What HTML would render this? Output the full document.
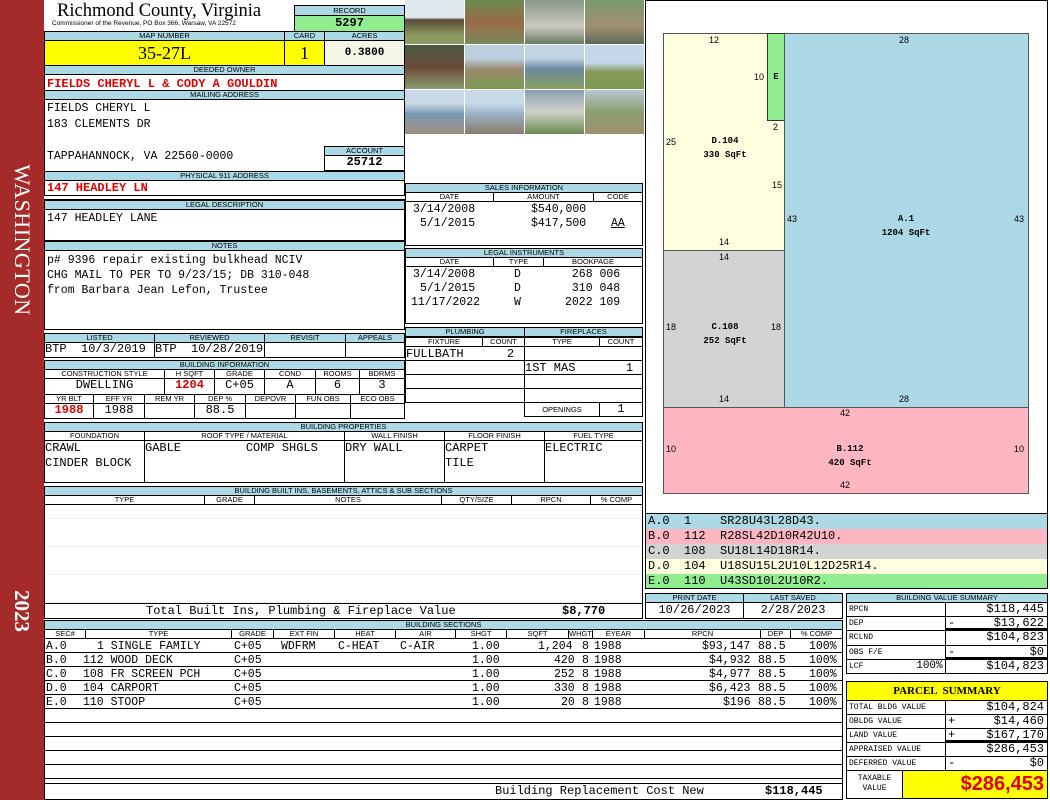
<!DOCTYPE html>
<html><head><meta charset="utf-8"><style>
*{margin:0;padding:0}
body{width:1050px;height:800px;position:relative;background:#fff;overflow:hidden;font-family:"Liberation Mono",monospace}
.c{position:absolute;box-sizing:border-box;border:1px solid #000;overflow:hidden;white-space:pre;font-size:11px;line-height:13px;padding-left:2px;color:#000}
.h{background:#add8e6;font-family:"Liberation Sans",sans-serif;font-size:7.5px;text-align:center;padding:0;line-height:8px}
.ct{text-align:center;padding:0}
.r{text-align:right;padding-right:3px}
.red{color:#e00000;font-weight:bold}
.n{position:absolute;font-family:"Liberation Sans",sans-serif;font-size:9px;color:#000}
.m{position:absolute;font-size:9px;font-weight:bold;text-align:center;line-height:14px}
.ph{position:absolute;width:59px;height:44px}
.t{position:absolute;font-size:11.5px;white-space:pre}
.row{position:absolute;left:44px;width:799px;height:14px;font-size:11.5px;line-height:14px;white-space:pre}
.row span{position:absolute;top:0}
</style></head><body>
<div style="position:absolute;left:0;top:0;width:44px;height:800px;background:#a52a2a"></div>
<div style="position:absolute;left:-68px;top:229px;width:180px;text-align:center;transform:rotate(90deg);color:#fff;font-family:'Liberation Serif',serif;font-size:22px;line-height:22px;letter-spacing:0.5px">WASHINGTON</div>
<div style="position:absolute;left:-8px;top:600px;width:60px;text-align:center;transform:rotate(90deg);color:#fff;font-family:'Liberation Serif',serif;font-size:21px;font-weight:bold;line-height:22px">2023</div>

<div style="position:absolute;left:57px;top:1px;font-family:'Liberation Serif',serif;font-size:18.5px;line-height:20px">Richmond County, Virginia</div>
<div style="position:absolute;left:52px;top:20px;font-family:'Liberation Sans',sans-serif;font-size:6.5px">Commissioner of the Revenue, PO Box 366, Warsaw, VA 22572</div>
<div class="c h" style="left:294px;top:5px;width:111px;height:11px;line-height:9px">RECORD</div>
<div class="c ct" style="left:294px;top:15px;width:111px;height:17px;background:#90ee90;font-weight:bold;font-size:12px;line-height:15px">5297</div>
<div class="c h" style="left:44px;top:31px;width:241px;height:10px">MAP NUMBER</div>
<div class="c h" style="left:284px;top:31px;width:41px;height:10px">CARD</div>
<div class="c h" style="left:324px;top:31px;width:81px;height:10px">ACRES</div>
<div class="c ct" style="left:44px;top:40px;width:241px;height:26px;background:#ffff00;font-family:'Liberation Serif',serif;font-size:18px;line-height:24px">35-27L</div>
<div class="c ct" style="left:284px;top:40px;width:41px;height:26px;background:#ffff00;font-family:'Liberation Serif',serif;font-size:18px;line-height:24px">1</div>
<div class="c ct" style="left:324px;top:40px;width:81px;height:26px;background:#f5f5e6;font-weight:bold;font-size:11px;line-height:24px">0.3800</div>
<div class="c h" style="left:44px;top:65px;width:361px;height:10px">DEEDED OWNER</div>
<div class="c red" style="left:44px;top:74px;width:361px;height:17px;line-height:18px;font-size:12px">FIELDS CHERYL L &amp; CODY A GOULDIN</div>
<div class="c h" style="left:44px;top:90px;width:361px;height:10px">MAILING ADDRESS</div>
<div class="c" style="left:44px;top:99px;width:361px;height:73px;line-height:16px;padding-top:1px;font-size:11.5px">FIELDS CHERYL L
183 CLEMENTS DR

TAPPAHANNOCK, VA 22560-0000</div>
<div class="c h" style="left:324px;top:146px;width:81px;height:10px">ACCOUNT</div>
<div class="c ct" style="left:324px;top:155px;width:81px;height:16px;font-weight:bold;font-size:12px">25712</div>
<div class="c h" style="left:44px;top:171px;width:361px;height:10px">PHYSICAL 911 ADDRESS</div>
<div class="c red" style="left:44px;top:180px;width:361px;height:16px;font-size:12px;line-height:15px">147 HEADLEY LN</div>
<div class="c" style="left:44px;top:199px;width:361px;height:42px;padding-top:12px;font-size:11.5px">147 HEADLEY LANE</div>
<div class="c h" style="left:44px;top:200px;width:361px;height:10px">LEGAL DESCRIPTION</div>
<div class="c" style="left:44px;top:240px;width:361px;height:90px;padding-top:12px;line-height:15px;font-size:11.5px">p# 9396 repair existing bulkhead NCIV
CHG MAIL TO PER TO 9/23/15; DB 310-048
from Barbara Jean Lefon, Trustee</div>
<div class="c h" style="left:44px;top:241px;width:361px;height:10px">NOTES</div>

<div class="c h" style="left:44px;top:333px;width:111px;height:10px">LISTED</div>
<div class="c h" style="left:154px;top:333px;width:111px;height:10px">REVIEWED</div>
<div class="c h" style="left:264px;top:333px;width:82px;height:10px">REVISIT</div>
<div class="c h" style="left:345px;top:333px;width:60px;height:10px">APPEALS</div>
<div class="c" style="left:44px;top:342px;width:111px;height:16px;padding:0;font-size:12px">BTP  10/3/2019</div>
<div class="c" style="left:154px;top:342px;width:111px;height:16px;padding:0;font-size:12px">BTP  10/28/2019</div>
<div class="c" style="left:264px;top:342px;width:82px;height:16px"></div>
<div class="c" style="left:345px;top:342px;width:60px;height:16px"></div>

<div class="c h" style="left:44px;top:360px;width:361px;height:10px">BUILDING INFORMATION</div>
<div class="c h" style="left:44px;top:369px;width:121px;height:10px;background:#fff">CONSTRUCTION STYLE</div>
<div class="c h" style="left:164px;top:369px;width:51px;height:10px;background:#fff">H SQFT</div>
<div class="c h" style="left:214px;top:369px;width:51px;height:10px;background:#fff">GRADE</div>
<div class="c h" style="left:264px;top:369px;width:52px;height:10px;background:#fff">COND</div>
<div class="c h" style="left:315px;top:369px;width:45px;height:10px;background:#fff">ROOMS</div>
<div class="c h" style="left:359px;top:369px;width:46px;height:10px;background:#fff">BDRMS</div>
<div class="c ct" style="left:44px;top:378px;width:121px;height:17px;font-size:12px">DWELLING</div>
<div class="c ct red" style="left:164px;top:378px;width:51px;height:17px;font-size:12px">1204</div>
<div class="c ct" style="left:214px;top:378px;width:51px;height:17px;font-size:12px">C+05</div>
<div class="c ct" style="left:264px;top:378px;width:52px;height:17px;font-size:12px">A</div>
<div class="c ct" style="left:315px;top:378px;width:45px;height:17px;font-size:12px">6</div>
<div class="c ct" style="left:359px;top:378px;width:46px;height:17px;font-size:12px">3</div>
<div class="c h" style="left:44px;top:394px;width:50px;height:10px;background:#fff">YR BLT</div>
<div class="c h" style="left:93px;top:394px;width:52px;height:10px;background:#fff">EFF YR</div>
<div class="c h" style="left:144px;top:394px;width:51px;height:10px;background:#fff">REM YR</div>
<div class="c h" style="left:194px;top:394px;width:52px;height:10px;background:#fff">DEP %</div>
<div class="c h" style="left:245px;top:394px;width:51px;height:10px;background:#fff">DEPOVR</div>
<div class="c h" style="left:295px;top:394px;width:56px;height:10px;background:#fff">FUN OBS</div>
<div class="c h" style="left:350px;top:394px;width:55px;height:10px;background:#fff">ECO OBS</div>
<div class="c ct red" style="left:44px;top:403px;width:50px;height:16px;font-size:12px">1988</div>
<div class="c ct" style="left:93px;top:403px;width:52px;height:16px;font-size:12px">1988</div>
<div class="c" style="left:144px;top:403px;width:51px;height:16px"></div>
<div class="c ct" style="left:194px;top:403px;width:52px;height:16px;font-size:12px">88.5</div>
<div class="c" style="left:245px;top:403px;width:51px;height:16px"></div>
<div class="c" style="left:295px;top:403px;width:56px;height:16px"></div>
<div class="c" style="left:350px;top:403px;width:55px;height:16px"></div>

<!-- photos -->
<div class="ph" style="left:405px;top:0;background:linear-gradient(#dfe8ef 40%,#5a4a3a 45%,#8a9a60 80%)"></div>
<div class="ph" style="left:465px;top:0;background:linear-gradient(#6a8a50,#9a6a4a 50%,#7a8a5a)"></div>
<div class="ph" style="left:525px;top:0;background:linear-gradient(#8a9a88,#c8c8c0 60%,#6a7a60)"></div>
<div class="ph" style="left:585px;top:0;background:linear-gradient(#7a9a70,#a09070 60%,#5a6a5a)"></div>
<div class="ph" style="left:405px;top:45px;background:linear-gradient(#4a5a40,#6a4a3a 50%,#8a9a70)"></div>
<div class="ph" style="left:465px;top:45px;background:linear-gradient(#bcd0e0 30%,#9a8a70 55%,#7a9a50)"></div>
<div class="ph" style="left:525px;top:45px;background:linear-gradient(#c0d4e4 30%,#6a8aa0 55%,#8aa060)"></div>
<div class="ph" style="left:585px;top:45px;background:linear-gradient(#c4d8ea 40%,#8a9a60 60%,#7a9a50)"></div>
<div class="ph" style="left:405px;top:90px;background:linear-gradient(#c8d8e8 30%,#7a98b0 55%,#a09080)"></div>
<div class="ph" style="left:465px;top:90px;background:linear-gradient(#c8dae8 30%,#9ab0c4 55%,#8a7a6a)"></div>
<div class="ph" style="left:525px;top:90px;background:linear-gradient(#8aa0b0,#d0d0c8 50%,#6a8a50)"></div>
<div class="ph" style="left:585px;top:90px;background:linear-gradient(#b8c8d4,#8aa070 50%,#a09070)"></div>

<!-- sales -->
<div class="c h" style="left:405px;top:183px;width:238px;height:10px">SALES INFORMATION</div>
<div class="c h" style="left:405px;top:192px;width:89px;height:10px;background:#fff">DATE</div>
<div class="c h" style="left:493px;top:192px;width:101px;height:10px;background:#fff">AMOUNT</div>
<div class="c h" style="left:593px;top:192px;width:50px;height:10px;background:#fff">CODE</div>
<div class="c" style="left:405px;top:201px;width:238px;height:45px"></div>
<div class="t" style="left:413px;top:203px">3/14/2008</div><div class="t" style="left:531px;top:203px">$540,000</div>
<div class="t" style="left:420px;top:217px">5/1/2015</div><div class="t" style="left:531px;top:217px">$417,500</div><div class="t" style="left:611px;top:217px;text-decoration:underline">AA</div>
<div class="c h" style="left:405px;top:248px;width:238px;height:10px">LEGAL INSTRUMENTS</div>
<div class="c h" style="left:405px;top:257px;width:89px;height:10px;background:#fff">DATE</div>
<div class="c h" style="left:493px;top:257px;width:51px;height:10px;background:#fff">TYPE</div>
<div class="c h" style="left:543px;top:257px;width:100px;height:10px;background:#fff">BOOKPAGE</div>
<div class="c" style="left:405px;top:266px;width:238px;height:58px"></div>
<div class="t" style="left:413px;top:268px">3/14/2008</div><div class="t" style="left:514px;top:268px">D</div><div class="t" style="left:565px;top:268px"> 268 006</div>
<div class="t" style="left:420px;top:282px">5/1/2015</div><div class="t" style="left:514px;top:282px">D</div><div class="t" style="left:565px;top:282px"> 310 048</div>
<div class="t" style="left:411px;top:296px">11/17/2022</div><div class="t" style="left:514px;top:296px">W</div><div class="t" style="left:565px;top:296px">2022 109</div>

<!-- plumbing -->
<div class="c h" style="left:405px;top:327px;width:120px;height:10px">PLUMBING</div>
<div class="c h" style="left:524px;top:327px;width:119px;height:10px">FIREPLACES</div>
<div class="c h" style="left:405px;top:337px;width:78px;height:10px;background:#fff">FIXTURE</div>
<div class="c h" style="left:482px;top:337px;width:43px;height:10px;background:#fff">COUNT</div>
<div class="c h" style="left:524px;top:337px;width:76px;height:10px;background:#fff">TYPE</div>
<div class="c h" style="left:599px;top:337px;width:44px;height:10px;background:#fff">COUNT</div>
<div class="c" style="left:405px;top:346px;width:120px;height:15px;padding:0;line-height:15px;font-size:12px">FULLBATH      2</div>
<div class="c" style="left:405px;top:360px;width:120px;height:15px"></div>
<div class="c" style="left:405px;top:374px;width:120px;height:15px"></div>
<div class="c" style="left:405px;top:388px;width:120px;height:15px"></div>
<div class="c" style="left:524px;top:346px;width:119px;height:15px"></div>
<div class="c" style="left:524px;top:360px;width:119px;height:15px;padding:0;line-height:14px;font-size:12px">1ST MAS       1</div>
<div class="c" style="left:524px;top:374px;width:119px;height:15px"></div>
<div class="c" style="left:524px;top:388px;width:119px;height:15px"></div>
<div class="c h" style="left:524px;top:402px;width:76px;height:15px;background:#fff;line-height:13px">OPENINGS</div>
<div class="c ct" style="left:599px;top:402px;width:44px;height:15px;font-size:12px">1</div>

<!-- building properties -->
<div class="c h" style="left:44px;top:422px;width:599px;height:10px">BUILDING PROPERTIES</div>
<div class="c h" style="left:44px;top:431px;width:101px;height:10px;background:#fff">FOUNDATION</div>
<div class="c h" style="left:144px;top:431px;width:201px;height:10px;background:#fff">ROOF TYPE / MATERIAL</div>
<div class="c h" style="left:344px;top:431px;width:101px;height:10px;background:#fff">WALL FINISH</div>
<div class="c h" style="left:444px;top:431px;width:101px;height:10px;background:#fff">FLOOR FINISH</div>
<div class="c h" style="left:544px;top:431px;width:99px;height:10px;background:#fff">FUEL TYPE</div>
<div class="c" style="left:44px;top:440px;width:101px;height:43px;padding:0;line-height:15px;font-size:12px">CRAWL
CINDER BLOCK</div>
<div class="c" style="left:144px;top:440px;width:201px;height:43px;padding:0;line-height:15px;font-size:12px">GABLE         COMP SHGLS</div>
<div class="c" style="left:344px;top:440px;width:101px;height:43px;padding:0;line-height:15px;font-size:12px">DRY WALL</div>
<div class="c" style="left:444px;top:440px;width:101px;height:43px;padding:0;line-height:15px;font-size:12px">CARPET
TILE</div>
<div class="c" style="left:544px;top:440px;width:99px;height:43px;padding:0;line-height:15px;font-size:12px">ELECTRIC</div>

<!-- built ins -->
<div class="c h" style="left:44px;top:486px;width:599px;height:10px">BUILDING BUILT INS, BASEMENTS, ATTICS &amp; SUB SECTIONS</div>
<div class="c h" style="left:44px;top:495px;width:161px;height:10px;background:#fff">TYPE</div>
<div class="c h" style="left:204px;top:495px;width:51px;height:10px;background:#fff">GRADE</div>
<div class="c h" style="left:254px;top:495px;width:188px;height:10px;background:#fff">NOTES</div>
<div class="c h" style="left:441px;top:495px;width:71px;height:10px;background:#fff">QTY/SIZE</div>
<div class="c h" style="left:511px;top:495px;width:80px;height:10px;background:#fff">RPCN</div>
<div class="c h" style="left:590px;top:495px;width:53px;height:10px;background:#fff">% COMP</div>
<div class="c" style="left:44px;top:504px;width:599px;height:100px;background:repeating-linear-gradient(#fff 0 13px,#eef0f4 13px 14px,#fff 14px 28px)"></div>
<div class="c" style="left:44px;top:603px;width:599px;height:16px"></div>
<div class="t" style="left:146px;top:604px;font-size:12px">Total Built Ins, Plumbing &amp; Fireplace Value</div>
<div class="t" style="left:562px;top:604px;font-size:12px;font-weight:bold">$8,770</div>

<!-- building sections -->
<div class="c h" style="left:44px;top:620px;width:799px;height:10px">BUILDING SECTIONS</div>
<div class="c h" style="left:44px;top:629px;width:42px;height:10px;background:#fff">SEC#</div>
<div class="c h" style="left:85px;top:629px;width:147px;height:10px;background:#fff">TYPE</div>
<div class="c h" style="left:231px;top:629px;width:43px;height:10px;background:#fff">GRADE</div>
<div class="c h" style="left:273px;top:629px;width:62px;height:10px;background:#fff">EXT FIN</div>
<div class="c h" style="left:334px;top:629px;width:62px;height:10px;background:#fff">HEAT</div>
<div class="c h" style="left:395px;top:629px;width:61px;height:10px;background:#fff">AIR</div>
<div class="c h" style="left:455px;top:629px;width:52px;height:10px;background:#fff">SHGT</div>
<div class="c h" style="left:506px;top:629px;width:63px;height:10px;background:#fff">SQFT</div>
<div class="c h" style="left:568px;top:629px;width:25px;height:10px;background:#fff">WHGT</div>
<div class="c h" style="left:592px;top:629px;width:53px;height:10px;background:#fff">EYEAR</div>
<div class="c h" style="left:644px;top:629px;width:117px;height:10px;background:#fff">RPCN</div>
<div class="c h" style="left:760px;top:629px;width:31px;height:10px;background:#fff">DEP</div>
<div class="c h" style="left:790px;top:629px;width:53px;height:10px;background:#fff">% COMP</div>
<div class="c" style="left:44px;top:638px;width:799px;height:146px;padding:0;background:repeating-linear-gradient(#fff 0 13px,#000 13px 14px)"></div>
<div class="row" style="top:640px"><span style="left:2px">A.0</span><span style="left:53px">1 SINGLE FAMILY</span><span style="left:190px">C+05</span><span style="left:237px">WDFRM</span><span style="left:294px">C-HEAT</span><span style="left:356px">C-AIR</span><span style="left:428px">1.00</span><span style="left:494px">1,204</span><span style="left:538px">8</span><span style="left:550px">1988</span><span style="left:658px">$93,147</span><span style="left:714px">88.5</span><span style="left:765px">100%</span></div>
<div class="row" style="top:654px"><span style="left:2px">B.0</span><span style="left:39px">112 WOOD DECK</span><span style="left:190px">C+05</span><span style="left:428px">1.00</span><span style="left:510px">420</span><span style="left:538px">8</span><span style="left:550px">1988</span><span style="left:665px">$4,932</span><span style="left:714px">88.5</span><span style="left:765px">100%</span></div>
<div class="row" style="top:668px"><span style="left:2px">C.0</span><span style="left:39px">108 FR SCREEN PCH</span><span style="left:190px">C+05</span><span style="left:428px">1.00</span><span style="left:510px">252</span><span style="left:538px">8</span><span style="left:550px">1988</span><span style="left:665px">$4,977</span><span style="left:714px">88.5</span><span style="left:765px">100%</span></div>
<div class="row" style="top:682px"><span style="left:2px">D.0</span><span style="left:39px">104 CARPORT</span><span style="left:190px">C+05</span><span style="left:428px">1.00</span><span style="left:510px">330</span><span style="left:538px">8</span><span style="left:550px">1988</span><span style="left:665px">$6,423</span><span style="left:714px">88.5</span><span style="left:765px">100%</span></div>
<div class="row" style="top:696px"><span style="left:2px">E.0</span><span style="left:39px">110 STOOP</span><span style="left:190px">C+05</span><span style="left:428px">1.00</span><span style="left:517px">20</span><span style="left:538px">8</span><span style="left:550px">1988</span><span style="left:679px">$196</span><span style="left:714px">88.5</span><span style="left:765px">100%</span></div>
<div class="c" style="left:44px;top:783px;width:799px;height:17px"></div>
<div class="t" style="left:495px;top:784px;font-size:12px">Building Replacement Cost New</div>
<div class="t" style="left:765px;top:784px;font-size:12px;font-weight:bold">$118,445</div>

<!-- sketch -->
<div class="c" style="left:645px;top:0;width:403px;height:515px"></div>
<div style="position:absolute;left:663px;top:33px;width:122px;height:218px;background:#ffffe0;border:1px solid #555;box-sizing:border-box"></div>
<div style="position:absolute;left:767px;top:33px;width:18px;height:88px;background:#90ee90;border:1px solid #333;box-sizing:border-box"></div>
<div style="position:absolute;left:784px;top:33px;width:245px;height:375px;background:#add8e6;border:1px solid #555;box-sizing:border-box"></div>
<div style="position:absolute;left:663px;top:250px;width:122px;height:158px;background:#d3d3d3;border:1px solid #555;box-sizing:border-box"></div>
<div style="position:absolute;left:663px;top:407px;width:366px;height:87px;background:#ffb6c1;border:1px solid #555;box-sizing:border-box"></div>
<div class="n" style="left:709px;top:35px">12</div>
<div class="n" style="left:899px;top:35px">28</div>
<div class="n" style="left:754px;top:72px">10</div>
<div class="m" style="left:770px;top:70px;width:12px">E</div>
<div class="n" style="left:773px;top:122px">2</div>
<div class="n" style="left:666px;top:137px">25</div>
<div class="m" style="left:685px;top:134px;width:80px">D.104<br>330 SqFt</div>
<div class="n" style="left:772px;top:180px">15</div>
<div class="n" style="left:787px;top:214px">43</div>
<div class="n" style="left:1014px;top:214px">43</div>
<div class="m" style="left:866px;top:212px;width:80px">A.1<br>1204 SqFt</div>
<div class="n" style="left:719px;top:237px">14</div>
<div class="n" style="left:719px;top:252px">14</div>
<div class="n" style="left:666px;top:322px">18</div>
<div class="n" style="left:771px;top:322px">18</div>
<div class="m" style="left:685px;top:320px;width:80px">C.108<br>252 SqFt</div>
<div class="n" style="left:719px;top:394px">14</div>
<div class="n" style="left:899px;top:394px">28</div>
<div class="n" style="left:840px;top:408px">42</div>
<div class="n" style="left:666px;top:444px">10</div>
<div class="n" style="left:1014px;top:444px">10</div>
<div class="m" style="left:810px;top:442px;width:80px">B.112<br>420 SqFt</div>
<div class="n" style="left:840px;top:480px">42</div>

<!-- legend -->
<div class="c" style="left:645px;top:513px;width:403px;height:76px;padding:0"></div>
<div class="c" style="left:646px;top:514px;width:401px;height:15px;border:0;background:#add8e6;font-size:12px;line-height:15px">A.0  1    SR28U43L28D43.</div>
<div class="c" style="left:646px;top:529px;width:401px;height:15px;border:0;background:#ffb6c1;font-size:12px;line-height:15px">B.0  112  R28SL42D10R42U10.</div>
<div class="c" style="left:646px;top:544px;width:401px;height:15px;border:0;background:#d3d3d3;font-size:12px;line-height:15px">C.0  108  SU18L14D18R14.</div>
<div class="c" style="left:646px;top:559px;width:401px;height:15px;border:0;background:#ffffe0;font-size:12px;line-height:15px">D.0  104  U18SU15L2U10L12D25R14.</div>
<div class="c" style="left:646px;top:574px;width:401px;height:14px;border:0;background:#90ee90;font-size:12px;line-height:14px">E.0  110  U43SD10L2U10R2.</div>

<div class="c h" style="left:645px;top:593px;width:99px;height:10px">PRINT DATE</div>
<div class="c h" style="left:743px;top:593px;width:100px;height:10px">LAST SAVED</div>
<div class="c ct" style="left:645px;top:602px;width:99px;height:17px;line-height:15px;font-size:12px">10/26/2023</div>
<div class="c ct" style="left:743px;top:602px;width:100px;height:17px;line-height:15px;font-size:12px">2/28/2023</div>

<!-- building value summary -->
<div class="c h" style="left:846px;top:593px;width:202px;height:10px">BUILDING VALUE SUMMARY</div>
<div class="c" style="left:846px;top:602px;width:100px;height:15px;font-size:8px">RPCN</div>
<div class="c r" style="left:945px;top:602px;width:103px;height:15px;font-size:12px">$118,445</div>
<div class="c" style="left:846px;top:616px;width:100px;height:15px;font-size:8px">DEP</div>
<div class="c r" style="left:945px;top:616px;width:103px;height:15px;border-bottom:3px solid #000;font-size:12px"><span style="float:left">-</span>$13,622</div>
<div class="c" style="left:846px;top:630px;width:100px;height:16px;font-size:8px">RCLND</div>
<div class="c r" style="left:945px;top:630px;width:103px;height:16px;font-size:12px">$104,823</div>
<div class="c" style="left:846px;top:645px;width:100px;height:15px;font-size:8px">OBS F/E</div>
<div class="c r" style="left:945px;top:645px;width:103px;height:15px;border-bottom:3px solid #000;font-size:12px"><span style="float:left">-</span>$0</div>
<div class="c" style="left:846px;top:659px;width:100px;height:15px;font-size:8px">LCF           <span style="font-size:11px">100%</span></div>
<div class="c r" style="left:945px;top:659px;width:103px;height:15px;font-size:12px">$104,823</div>

<!-- parcel summary -->
<div class="c ct" style="left:846px;top:681px;width:202px;height:20px;background:#ffff00;font-weight:bold;font-size:11px;line-height:18px;font-family:'Liberation Serif',serif">PARCEL  SUMMARY</div>
<div class="c" style="left:846px;top:700px;width:100px;height:15px;font-size:8px">TOTAL BLDG VALUE</div>
<div class="c r" style="left:945px;top:700px;width:103px;height:15px;font-size:12px">$104,824</div>
<div class="c" style="left:846px;top:714px;width:100px;height:15px;font-size:8px">OBLDG VALUE</div>
<div class="c r" style="left:945px;top:714px;width:103px;height:15px;font-size:12px"><span style="float:left">+</span>$14,460</div>
<div class="c" style="left:846px;top:728px;width:100px;height:15px;font-size:8px">LAND VALUE</div>
<div class="c r" style="left:945px;top:728px;width:103px;height:15px;border-bottom:3px solid #000;font-size:12px"><span style="float:left">+</span>$167,170</div>
<div class="c" style="left:846px;top:742px;width:100px;height:15px;font-size:8px">APPRAISED VALUE</div>
<div class="c r" style="left:945px;top:742px;width:103px;height:15px;font-size:12px">$286,453</div>
<div class="c" style="left:846px;top:756px;width:100px;height:15px;font-size:8px">DEFERRED VALUE</div>
<div class="c r" style="left:945px;top:756px;width:103px;height:15px;font-size:12px"><span style="float:left">-</span>$0</div>
<div class="c ct" style="left:846px;top:770px;width:57px;height:29px;font-size:8px;line-height:10px;padding-top:3px">TAXABLE
VALUE</div>
<div class="c r" style="left:902px;top:770px;width:146px;height:29px;background:#ffff00;color:#e00000;font-family:'Liberation Sans',sans-serif;font-weight:bold;font-size:20px;line-height:27px">$286,453</div>
</body></html>
